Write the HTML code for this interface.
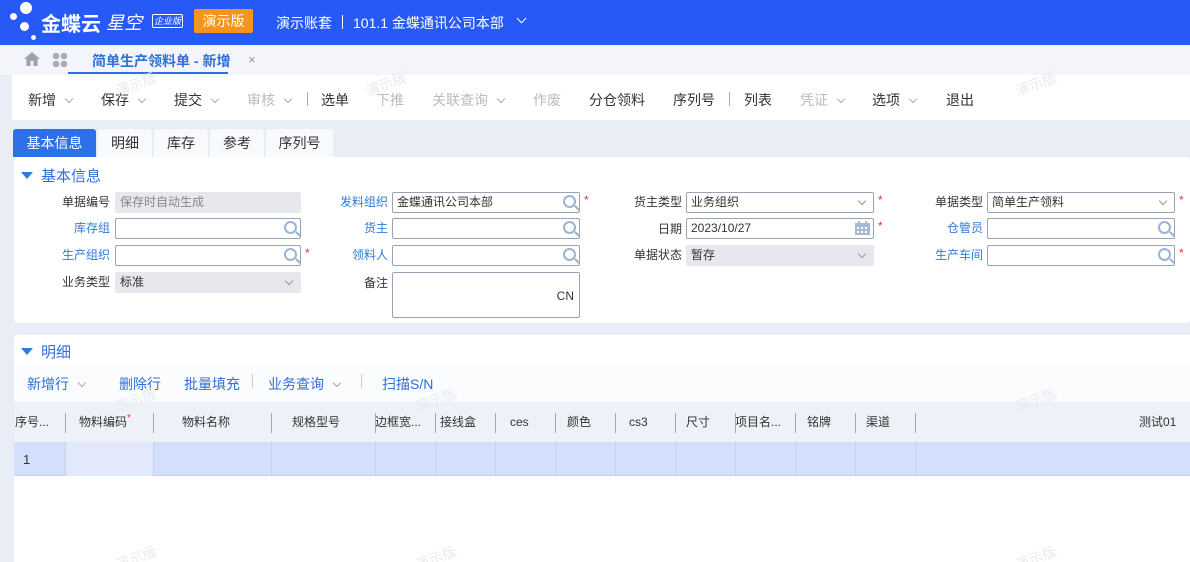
<!DOCTYPE html>
<html><head><meta charset="utf-8"><style>
*{margin:0;padding:0;box-sizing:border-box}
html,body{width:1190px;height:562px;overflow:hidden}
body{background:#e9edf6;font-family:"Liberation Sans","Noto Sans CJK SC",sans-serif;font-size:13px;color:#333;position:relative}
.a{position:absolute}
.hdr{left:0;top:0;width:1190px;height:45px;background:#2759f6}
.dot{position:absolute;background:#fff;border-radius:50%}
.tabbar{left:0;top:45px;width:1190px;height:30px;background:#f3f5fa}
.tb{left:12px;top:75px;width:1178px;height:45px;background:#fff}
.tb span{position:absolute;top:15px;font-size:14px;color:#333}
.tb .g{color:#bbb}
.chev{display:inline-block;width:6px;height:6px;border-right:1px solid #aaa;border-bottom:1px solid #aaa;transform:rotate(45deg);margin-left:10px;position:relative;top:-3px}
.vt{position:absolute;top:17px;width:1px;height:14px;background:#aaa}
.tab{position:absolute;top:129px;height:28px;line-height:28px;text-align:center;font-size:14px;background:#f8f9fb;border-radius:3px 3px 0 0;color:#333}
.panel{background:#fff;left:14px;width:1176px}
.lbl{position:absolute;font-size:12px;text-align:right;width:90px;line-height:20px}
.blue{color:#2f7bd9}
.inp{position:absolute;height:21px;border:1px solid #9aa3b5;border-radius:2px;background:#fff;font-size:12px;line-height:19px;padding-left:4px;color:#333}
.dis{background:#e6e8ed;border-color:#e6e8ed;color:#888}
.star{position:absolute;color:#e33;font-size:12px}
.mag{position:absolute;right:3px;top:2px;width:13px;height:13px;border:2px solid #9ab4d2;border-radius:50%}
.mag:after{content:"";position:absolute;width:2px;height:6px;background:#9ab4d2;right:-4px;bottom:-5px;transform:rotate(-45deg)}
.dd{position:absolute;right:8px;top:5px;width:6px;height:6px;border-right:1px solid #999;border-bottom:1px solid #999;transform:rotate(45deg)}
.tri{position:absolute;width:0;height:0;border-left:6px solid transparent;border-right:6px solid transparent;border-top:7px solid #2f7bd9}
.th{position:absolute;top:402px;height:40px;line-height:40px;font-size:12px;color:#333}
.sep{position:absolute;top:413px;width:1px;height:20px;background:#aaa}
.cl{position:absolute;top:442px;width:1px;height:34px;background:#c9d3e8}
.wm{position:absolute;color:#e8eaee;font-size:14px;transform:rotate(-20deg)}
</style></head><body>
<div class="a hdr">
 <div class="dot" style="left:20px;top:2px;width:12px;height:12px"></div>
 <div class="dot" style="left:10px;top:13px;width:7px;height:7px"></div>
 <div class="dot" style="left:20px;top:22px;width:9px;height:9px"></div>
 <div class="dot" style="left:31px;top:35px;width:5px;height:5px"></div>
 <div class="a" style="left:41px;top:8px;color:#fff;font-size:20px;font-weight:bold">金蝶云</div>
 <div class="a" style="left:106px;top:9px;color:#fff;font-size:18px;font-style:italic">星空</div>
 <div class="a" style="left:152px;top:14px;width:31px;height:14px;border:1px solid #fff;border-radius:2px;color:#fff;font-size:9px;line-height:12px;text-align:center;font-style:italic">企业版</div>
 <div class="a" style="left:194px;top:9px;width:59px;height:24px;background:#f7941d;border-radius:2px;color:#fff;font-size:14px;line-height:24px;text-align:center">演示版</div>
 <div class="a" style="left:276px;top:13px;color:#fff;font-size:14px">演示账套</div>
 <div class="a" style="left:342px;top:15px;width:1px;height:14px;background:#fff"></div>
 <div class="a" style="left:353px;top:13px;color:#fff;font-size:14px">101.1 金蝶通讯公司本部</div>
 <div class="a" style="left:518px;top:15px;width:7px;height:7px;border-right:1.5px solid #fff;border-bottom:1.5px solid #fff;transform:rotate(45deg)"></div>
</div>
<div class="a tabbar">
 <svg class="a" style="left:23px;top:6px" width="18" height="16" viewBox="0 0 18 16"><path d="M9 1L1 8h2.5v7h4v-5h3v5h4V8H17z" fill="#9ca3af"/></svg>
 <svg class="a" style="left:52px;top:7px" width="16" height="16" viewBox="0 0 16 16"><g fill="#a8adb8"><circle cx="4" cy="4" r="3.3"/><circle cx="12" cy="4" r="3.3"/><circle cx="4" cy="12" r="3.3"/><circle cx="12" cy="12" r="3.3"/></g></svg>
 <div class="a" style="left:92px;top:6px;color:#2f6fd9;font-size:14px;font-weight:bold">简单生产领料单 - 新增</div>
 <div class="a" style="left:248px;top:7px;color:#999;font-size:13px">×</div>
 <div class="a" style="left:68px;top:27px;width:160px;height:2px;background:#2f6fe8"></div>
</div>
<div class="a tb">
 <span style="left:16px">新增<i class="chev"></i></span>
 <span style="left:89px">保存<i class="chev"></i></span>
 <span style="left:162px">提交<i class="chev"></i></span>
 <span class="g" style="left:235px">审核<i class="chev"></i></span>
 <div class="vt" style="left:295px"></div>
 <span style="left:309px">选单</span>
 <span class="g" style="left:364px">下推</span>
 <span class="g" style="left:420px">关联查询<i class="chev"></i></span>
 <span class="g" style="left:521px">作废</span>
 <span style="left:577px">分仓领料</span>
 <span style="left:661px">序列号</span>
 <div class="vt" style="left:717px"></div>
 <span style="left:732px">列表</span>
 <span class="g" style="left:788px">凭证<i class="chev"></i></span>
 <span style="left:860px">选项<i class="chev"></i></span>
 <span style="left:934px">退出</span>
</div>
<div class="tab" style="left:13px;width:83px;background:#2f6fe8;color:#fff">基本信息</div>
<div class="tab" style="left:98px;width:54px">明细</div>
<div class="tab" style="left:154px;width:54px">库存</div>
<div class="tab" style="left:210px;width:54px">参考</div>
<div class="tab" style="left:266px;width:67px">序列号</div>

<div class="a panel" style="top:157px;height:166px;border-radius:0 4px 4px 4px"></div>
<div class="tri" style="left:21px;top:172px"></div>
<div class="a" style="left:41px;top:165px;font-size:15px;color:#2f6fd9">基本信息</div>

<div class="lbl" style="left:20px;top:192px">单据编号</div>
<div class="inp dis" style="left:115px;top:192px;width:186px">保存时自动生成</div>
<div class="lbl blue" style="left:20px;top:218px">库存组</div>
<div class="inp" style="left:115px;top:218px;width:186px"><i class="mag"></i></div>
<div class="lbl blue" style="left:20px;top:245px">生产组织</div>
<div class="inp" style="left:115px;top:245px;width:186px"><i class="mag"></i></div>
<div class="star" style="left:305px;top:246px">*</div>
<div class="lbl" style="left:20px;top:272px">业务类型</div>
<div class="inp dis" style="left:115px;top:272px;width:186px;color:#333">标准<i class="dd"></i></div>

<div class="lbl blue" style="left:298px;top:192px">发料组织</div>
<div class="inp" style="left:392px;top:192px;width:188px">金蝶通讯公司本部<i class="mag"></i></div>
<div class="star" style="left:584px;top:193px">*</div>
<div class="lbl blue" style="left:298px;top:218px">货主</div>
<div class="inp" style="left:392px;top:218px;width:188px"><i class="mag"></i></div>
<div class="lbl blue" style="left:298px;top:245px">领料人</div>
<div class="inp" style="left:392px;top:245px;width:188px"><i class="mag"></i></div>
<div class="lbl" style="left:298px;top:273px">备注</div>
<div class="inp" style="left:392px;top:272px;width:188px;height:46px"><span class="a" style="right:5px;top:14px">CN</span></div>

<div class="lbl" style="left:592px;top:192px">货主类型</div>
<div class="inp" style="left:686px;top:192px;width:188px">业务组织<i class="dd"></i></div>
<div class="star" style="left:878px;top:193px">*</div>
<div class="lbl" style="left:592px;top:219px">日期</div>
<div class="inp" style="left:686px;top:218px;width:188px">2023/10/27<svg class="a" style="right:3px;top:2px" width="15" height="14" viewBox="0 0 15 14"><rect x="0" y="2" width="15" height="12" fill="#a7b9d3"/><g fill="#fff"><rect x="2" y="6" width="2" height="2"/><rect x="6" y="6" width="2" height="2"/><rect x="10" y="6" width="2" height="2"/><rect x="2" y="10" width="2" height="2"/><rect x="6" y="10" width="2" height="2"/><rect x="10" y="10" width="2" height="2"/></g><rect x="3" y="0" width="2" height="3" fill="#a7b9d3"/><rect x="10" y="0" width="2" height="3" fill="#a7b9d3"/></svg></div>
<div class="star" style="left:878px;top:219px">*</div>
<div class="lbl" style="left:592px;top:245px">单据状态</div>
<div class="inp dis" style="left:686px;top:245px;width:188px;color:#333">暂存<i class="dd"></i></div>

<div class="lbl" style="left:893px;top:192px">单据类型</div>
<div class="inp" style="left:987px;top:192px;width:188px">简单生产领料<i class="dd"></i></div>
<div class="star" style="left:1179px;top:193px">*</div>
<div class="lbl blue" style="left:893px;top:218px">仓管员</div>
<div class="inp" style="left:987px;top:218px;width:188px"><i class="mag"></i></div>
<div class="lbl blue" style="left:893px;top:245px">生产车间</div>
<div class="inp" style="left:987px;top:245px;width:188px"><i class="mag"></i></div>
<div class="star" style="left:1179px;top:246px">*</div>

<div class="a panel" style="top:335px;height:227px;border-radius:4px 0 0 0"></div>
<div class="a" style="left:14px;top:365px;width:1176px;height:37px;background:#fbfcfe"></div>
<div class="tri" style="left:21px;top:348px"></div>
<div class="a" style="left:41px;top:341px;font-size:15px;color:#2f6fd9">明细</div>
<div class="a" style="left:27px;top:374px;font-size:14px;color:#2f6fd9">新增行<i class="chev"></i></div>
<div class="a" style="left:119px;top:374px;font-size:14px;color:#2f6fd9">删除行</div>
<div class="a" style="left:184px;top:374px;font-size:14px;color:#2f6fd9">批量填充</div>
<div class="a" style="left:252px;top:374px;width:1px;height:14px;background:#ccc"></div>
<div class="a" style="left:268px;top:374px;font-size:14px;color:#2f6fd9">业务查询<i class="chev"></i></div>
<div class="a" style="left:361px;top:374px;width:1px;height:14px;background:#ccc"></div>
<div class="a" style="left:382px;top:374px;font-size:14px;color:#2f6fd9">扫描S/N</div>

<div class="a" style="left:14px;top:402px;width:1176px;height:40px;background:#eef1f8"></div>
<div class="a" style="left:14px;top:442px;width:1176px;height:34px;background:#d3e0fc;border-bottom:1px solid #c6d0e4"></div>
<div class="a" style="left:65px;top:442px;width:88px;height:34px;background:#e2e9fc"></div>
<div class="a" style="left:23px;top:452px;font-size:13px">1</div>
<div class="th" style="left:15px">序号...</div>
<div class="th" style="left:79px">物料编码<span style="color:#e33;font-size:10px;position:relative;top:-5px">*</span></div>
<div class="th" style="left:182px">物料名称</div>
<div class="th" style="left:292px">规格型号</div>
<div class="th" style="left:375px">边框宽...</div>
<div class="th" style="left:440px">接线盒</div>
<div class="th" style="left:510px">ces</div>
<div class="th" style="left:567px">颜色</div>
<div class="th" style="left:629px">cs3</div>
<div class="th" style="left:686px">尺寸</div>
<div class="th" style="left:735px">项目名...</div>
<div class="th" style="left:807px">铭牌</div>
<div class="th" style="left:866px">渠道</div>
<div class="th" style="left:1139px">测试01</div>
<div class="sep" style="left:65px"></div><div class="sep" style="left:153px"></div><div class="sep" style="left:271px"></div><div class="sep" style="left:375px"></div><div class="sep" style="left:435px"></div><div class="sep" style="left:495px"></div><div class="sep" style="left:555px"></div><div class="sep" style="left:615px"></div><div class="sep" style="left:675px"></div><div class="sep" style="left:735px"></div><div class="sep" style="left:795px"></div><div class="sep" style="left:855px"></div><div class="sep" style="left:915px"></div>
<div class="cl" style="left:65px"></div><div class="cl" style="left:153px"></div><div class="cl" style="left:271px"></div><div class="cl" style="left:375px"></div><div class="cl" style="left:435px"></div><div class="cl" style="left:495px"></div><div class="cl" style="left:555px"></div><div class="cl" style="left:615px"></div><div class="cl" style="left:675px"></div><div class="cl" style="left:735px"></div><div class="cl" style="left:795px"></div><div class="cl" style="left:855px"></div><div class="cl" style="left:915px"></div>

<div class="wm" style="left:115px;top:74px">演示版</div>
<div class="wm" style="left:365px;top:74px">演示版</div>
<div class="wm" style="left:1015px;top:74px">演示版</div>
<div class="wm" style="left:115px;top:390px">演示版</div>
<div class="wm" style="left:415px;top:390px">演示版</div>
<div class="wm" style="left:1015px;top:390px">演示版</div>
<div class="wm" style="left:115px;top:548px">演示版</div>
<div class="wm" style="left:415px;top:548px">演示版</div>
<div class="wm" style="left:1015px;top:548px">演示版</div>
</body></html>
